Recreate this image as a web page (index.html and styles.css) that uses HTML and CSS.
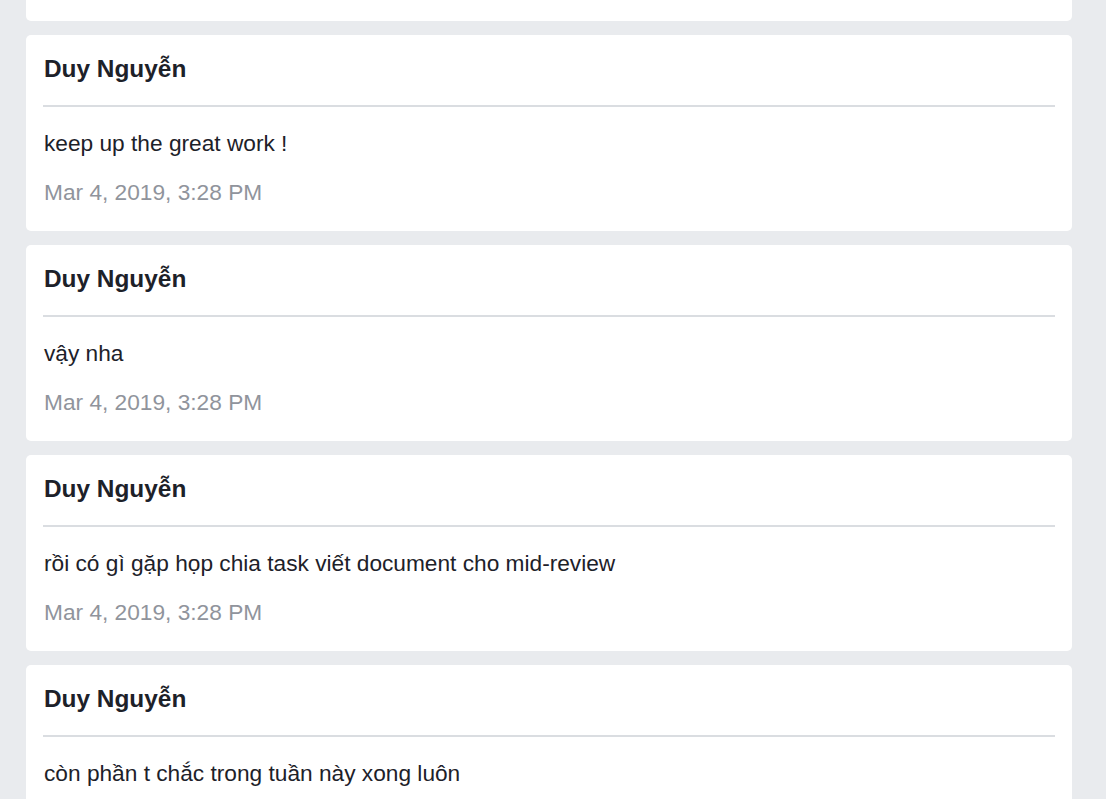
FILE: index.html
```html
<!DOCTYPE html>
<html lang="vi">
<head>
<meta charset="utf-8">
<title>Comments</title>
<link rel="stylesheet" href="styles.css">
</head>
<body>
<div class="feed">
  <div class="card card-partial"></div>
  <div class="card">
    <div class="card-head"><div class="name">Duy Nguyễn</div></div>
    <div class="msg">keep up the great work !</div>
    <div class="date">Mar 4, 2019, 3:28 PM</div>
  </div>
  <div class="card">
    <div class="card-head"><div class="name">Duy Nguyễn</div></div>
    <div class="msg">vậy nha</div>
    <div class="date">Mar 4, 2019, 3:28 PM</div>
  </div>
  <div class="card">
    <div class="card-head"><div class="name">Duy Nguyễn</div></div>
    <div class="msg">rồi có gì gặp họp chia task viết document cho mid-review</div>
    <div class="date">Mar 4, 2019, 3:28 PM</div>
  </div>
  <div class="card">
    <div class="card-head"><div class="name">Duy Nguyễn</div></div>
    <div class="msg">còn phần t chắc trong tuần này xong luôn</div>
    <div class="date">Mar 4, 2019, 3:28 PM</div>
  </div>
</div>
</body>
</html>
```
FILE: styles.css
```css
html, body {
  margin: 0;
  padding: 0;
  height: 100%;
  overflow: hidden;
  background: #e9ebee;
}
body {
  font-family: "Liberation Sans", Arial, Helvetica, sans-serif;
  color: #1d2129;
}
.feed {
  display: flex;
  flex-direction: column;
  gap: 14px;
  padding: 0 34px 0 26px;
}
.card {
  background: #ffffff;
  border-radius: 5px;
  height: 196px;
  box-sizing: border-box;
  padding: 20px 17px 0 17px;
  display: flex;
  flex-direction: column;
  flex-shrink: 0;
}
.card-partial {
  height: 21px;
  border-radius: 0 0 5px 5px;
  padding: 0;
}
.card-head {
  padding-bottom: 22px;
  border-bottom: 2px solid #dadde1;
}
.name {
  padding-left: 1px;
  font-size: 24.4px;
  line-height: 28px;
  font-weight: bold;
  color: #1d2129;
}
.msg {
  margin-top: 23px;
  padding-left: 1px;
  font-size: 22.7px;
  line-height: 27px;
  color: #1d2129;
}
.date {
  margin-top: 22px;
  padding-left: 1px;
  font-size: 22.7px;
  line-height: 27px;
  color: #90949c;
}
```
